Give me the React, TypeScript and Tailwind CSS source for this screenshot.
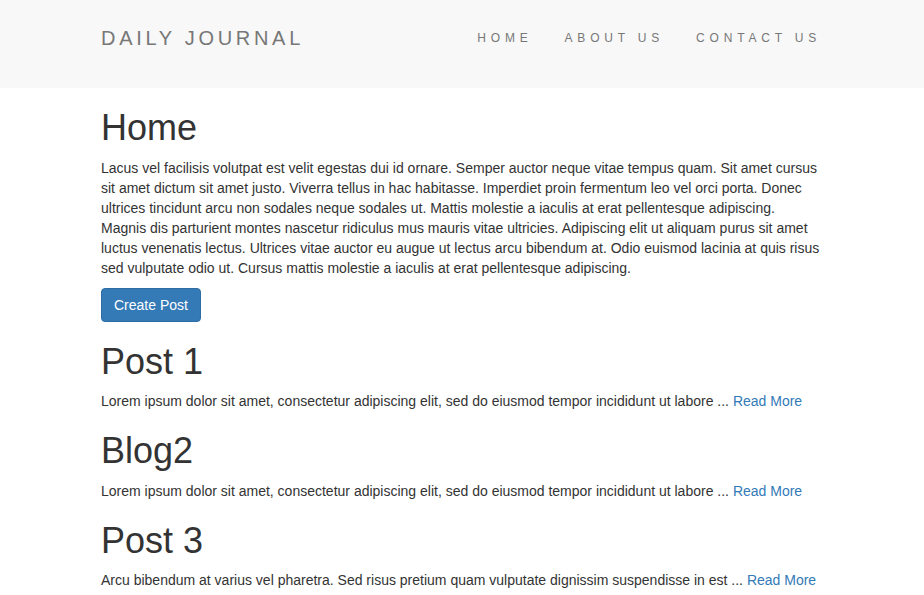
import React from 'react';

const posts = [
  {
    id: 1,
    title: 'Post 1',
    excerpt: 'Lorem ipsum dolor sit amet, consectetur adipiscing elit, sed do eiusmod tempor incididunt ut labore',
  },
  {
    id: 2,
    title: 'Blog2',
    excerpt: 'Lorem ipsum dolor sit amet, consectetur adipiscing elit, sed do eiusmod tempor incididunt ut labore',
  },
  {
    id: 3,
    title: 'Post 3',
    excerpt: 'Arcu bibendum at varius vel pharetra. Sed risus pretium quam vulputate dignissim suspendisse in est',
  },
];

const homeText =
  'Lacus vel facilisis volutpat est velit egestas dui id ornare. Semper auctor neque vitae tempus quam. Sit amet cursus sit amet dictum sit amet justo. Viverra tellus in hac habitasse. Imperdiet proin fermentum leo vel orci porta. Donec ultrices tincidunt arcu non sodales neque sodales ut. Mattis molestie a iaculis at erat pellentesque adipiscing. Magnis dis parturient montes nascetur ridiculus mus mauris vitae ultricies. Adipiscing elit ut aliquam purus sit amet luctus venenatis lectus. Ultrices vitae auctor eu augue ut lectus arcu bibendum at. Odio euismod lacinia at quis risus sed vulputate odio ut. Cursus mattis molestie a iaculis at erat pellentesque adipiscing.';

const App: React.FC = () => {
  return (
    <div className="min-h-screen bg-white text-[14px] leading-[20px] text-[#333] font-['Liberation_Sans',Arial,sans-serif]">
      {/* navbar */}
      <nav className="h-[88px] bg-[#f8f8f8]">
        <div className="mx-auto flex h-full w-[750px] items-center justify-between pb-3 pl-[14px] pr-[16px]">
          <a href="#" className="text-[20px] tracking-[3.7px] text-[#777]">
            DAILY JOURNAL
          </a>
          <ul className="-mr-[16px] flex items-center">
            {['HOME', 'ABOUT US', 'CONTACT US'].map((item) => (
              <li key={item}>
                <a href="#" className="block px-[16px] text-[12px] tracking-[4.8px] text-[#777]">
                  {item}
                </a>
              </li>
            ))}
          </ul>
        </div>
      </nav>

      <div className="mx-auto w-[750px] pl-[14px] pr-[16px]">
        <h1 className="mt-5 mb-2.5 text-[36px] leading-[1.1] font-medium">Home</h1>
        <p className="mb-2.5">{homeText}</p>
        <button className="h-[34px] rounded-[4px] border border-[#2e6da4] bg-[#337ab7] px-3 text-[14px] text-white">
          Create Post
        </button>

        {posts.map((post) => (
          <div key={post.id}>
            <h1 className="mt-5 mb-2.5 text-[36px] leading-[1.1] font-medium">{post.title}</h1>
            <p className="mb-2.5">
              {post.excerpt} ...{' '}
              <a href="#" className="text-[#337ab7]">
                Read More
              </a>
            </p>
          </div>
        ))}
      </div>
    </div>
  );
};

export default App;
